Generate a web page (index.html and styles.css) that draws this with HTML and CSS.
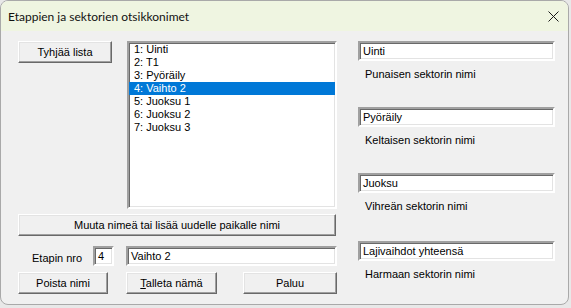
FILE: index.html
```html
<!DOCTYPE html>
<html lang="fi">
<head>
  <meta charset="UTF-8">
  <title>Etappien ja sektorien otsikkonimet</title>
  <link rel="stylesheet" href="styles.css">
</head>
<body>
  <div class="window">
    <!-- Otsikkorivi -->
    <div class="titlebar">
      <span class="title">Etappien ja sektorien otsikkonimet</span>
      <svg class="close" width="11" height="11" viewBox="0 0 11 11">
        <path d="M0.5 0.5 L10.5 10.5 M10.5 0.5 L0.5 10.5" stroke="#1a1a1a" stroke-width="1" fill="none"/>
      </svg>
    </div>

    <div class="client">
      <!-- Vasen puoli: etappilista -->
      <div class="left">
        <div class="top-row">
          <button class="btn btn-clear">Tyhjää lista</button>
          <ul class="listbox">
            <li>1: Uinti</li>
            <li>2: T1</li>
            <li>3: Pyöräily</li>
            <li class="selected">4: Vaihto 2</li>
            <li>5: Juoksu 1</li>
            <li>6: Juoksu 2</li>
            <li>7: Juoksu 3</li>
          </ul>
        </div>
        <button class="btn btn-rename">Muuta nimeä tai lisää uudelle paikalle nimi</button>
        <div class="edit-row">
          <label class="lbl-nro">Etapin nro</label>
          <div class="field field-nro">4</div>
          <div class="field field-name">Vaihto 2</div>
        </div>
        <div class="button-row">
          <button class="btn btn-delete">Poista nimi</button>
          <button class="btn btn-save"><u>T</u>alleta nämä</button>
          <button class="btn btn-back">Paluu</button>
        </div>
      </div>

      <!-- Oikea puoli: sektorien nimet -->
      <div class="right">
        <div class="sector">
          <div class="field">Uinti</div>
          <div class="caption">Punaisen sektorin nimi</div>
        </div>
        <div class="sector">
          <div class="field">Pyöräily</div>
          <div class="caption">Keltaisen sektorin nimi</div>
        </div>
        <div class="sector">
          <div class="field">Juoksu</div>
          <div class="caption">Vihreän sektorin nimi</div>
        </div>
        <div class="sector last">
          <div class="field">Lajivaihdot yhteensä</div>
          <div class="caption">Harmaan sektorin nimi</div>
        </div>
      </div>
    </div>
  </div>
</body>
</html>
```

FILE: styles.css
```css
* {
  margin: 0;
  padding: 0;
  box-sizing: border-box;
}
body {
  background: #e8e8e8;
  font-family: 'Liberation Sans', Arial, sans-serif;
  font-size: 11px;
  color: #000;
}

/* Ikkuna */
.window {
  width: 569px;
  height: 305px;
  background: #f0f0f0;
  border: 1px solid #a9a9a9;
  border-radius: 8px;
  overflow: hidden;
}
.titlebar {
  height: 30px;
  background: #eff5e1;
  display: flex;
  align-items: center;
  justify-content: space-between;
  padding: 0 9px 0 7px;
}
.title {
  font-family: Lato, sans-serif;
  font-size: 12px;
  color: #111;
}

/* Sisältö */
.client {
  display: flex;
  padding: 10px 0 0 17px;
  gap: 21px;
}
.left {
  width: 319px;
  display: flex;
  flex-direction: column;
}
.top-row {
  display: flex;
  gap: 15px;
  align-items: flex-start;
}

/* Painikkeet */
.btn {
  font-family: inherit;
  font-size: 11px;
  color: #000;
  background: #f0f0f0;
  height: 22px;
  border: 1px solid;
  border-color: #fff #696969 #696969 #fff;
  box-shadow: inset -1px -1px 0 #a0a0a0, inset 1px 1px 0 #e3e3e3;
  cursor: default;
}
.btn-clear { width: 94px; }
.btn-rename {
  width: 318px;
  margin-top: 5px;
}
.button-row {
  display: flex;
  margin-top: 6px;
}
.btn-delete { width: 90px; }
.btn-save { width: 91px; margin-left: 18px; }
.btn-back { width: 94px; margin-left: 26px; }

/* Lista */
.listbox {
  list-style: none;
  width: 210px;
  height: 168px;
  background: #fff;
  border: 2px solid;
  border-color: #a0a0a0 #fff #fff #a0a0a0;
  box-shadow: inset 1px 1px 0 #696969, inset -1px -1px 0 #e3e3e3;
}
.listbox li {
  height: 13px;
  line-height: 13px;
  padding-left: 5px;
}
.listbox li.selected {
  background: #0078d7;
  color: #fff;
}

/* Tekstikentät */
.field {
  height: 20px;
  line-height: 16px;
  background: #fff;
  border: 2px solid;
  border-color: #a0a0a0 #fff #fff #a0a0a0;
  box-shadow: inset 1px 1px 0 #696969, inset -1px -1px 0 #e3e3e3;
  padding-left: 3px;
  white-space: nowrap;
}
.edit-row {
  display: flex;
  align-items: center;
  margin-top: 10px;
}
.lbl-nro {
  margin-left: 14px;
  width: 61px;
  padding-top: 3px;
}
.field-nro { width: 21px; }
.field-name {
  width: 211px;
  margin-left: 12px;
}

/* Oikea sarake */
.right {
  width: 197px;
  display: flex;
  flex-direction: column;
}
.sector {
  height: 66px;
}
.sector:nth-child(3) {
  height: 68px;
}
.caption {
  margin: 7px 0 0 7px;
}
```
